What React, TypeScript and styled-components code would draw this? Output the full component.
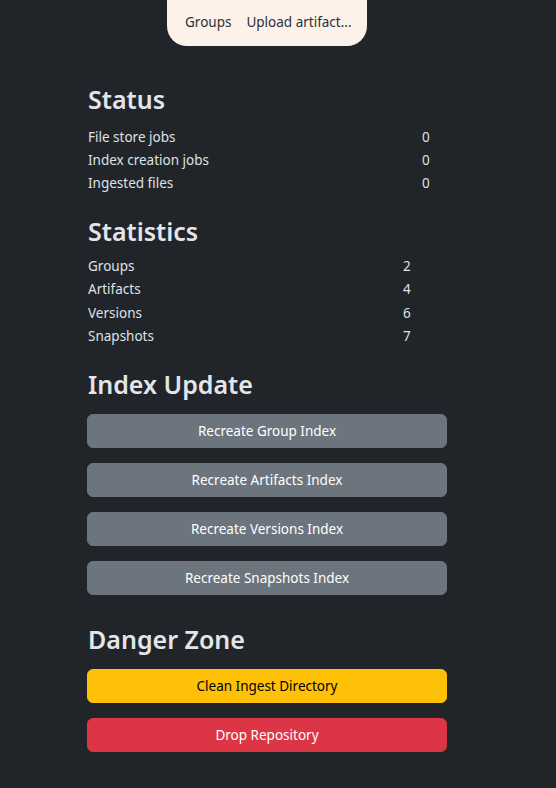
import React from "react";
import styled, { createGlobalStyle } from "styled-components";

const Global = createGlobalStyle`
  html, body { margin: 0; padding: 0; background: #212529; }
  body {
    font-family: "Noto Sans", "Open Sans", sans-serif;
    color: #dee2e6;
    font-size: 13.5px;
  }
`;

const Page = styled.div`
  min-height: 788px;
  background: #212529;
  display: flex;
  flex-direction: column;
`;

const Nav = styled.nav`
  margin-left: 167px;
  width: 200px;
  height: 46px;
  box-sizing: border-box;
  background: #fdf2ea;
  border-radius: 0 0 20px 20px;
  display: flex;
  align-items: center;
  gap: 15px;
  padding: 0 18px 3px 18px;
  color: #2b3035;
  font-size: 13.5px;
  white-space: nowrap;
`;

const NavLink = styled.span`
  cursor: pointer;
`;

const Main = styled.main`
  margin-left: 87px;
  width: 360px;
  display: flex;
  flex-direction: column;
`;

const Heading = styled.h2<{ $top: number; $bottom: number }>`
  margin: ${(p) => p.$top}px 0 ${(p) => p.$bottom}px 1px;
  font-size: 25px;
  font-weight: 600;
  line-height: 33px;
  color: #e3e6e9;
`;

const Table = styled.div<{ $label: number; $row: number }>`
  display: grid;
  grid-template-columns: ${(p) => p.$label}px auto;
  grid-auto-rows: ${(p) => p.$row}px;
  margin-left: 1px;
`;

const Cell = styled.div`
  font-size: 13.5px;
  line-height: 23px;
  color: #dee2e6;
`;

const ButtonStack = styled.div`
  display: flex;
  flex-direction: column;
  gap: 15px;
`;

const variants = {
  secondary: { bg: "#6c757d", fg: "#ffffff" },
  warning: { bg: "#ffc107", fg: "#000000" },
  danger: { bg: "#dc3545", fg: "#ffffff" },
};

const Button = styled.button<{ $variant: keyof typeof variants }>`
  height: 34px;
  width: 100%;
  border: 1px solid ${(p) => variants[p.$variant].bg};
  border-radius: 6px;
  background: ${(p) => variants[p.$variant].bg};
  color: ${(p) => variants[p.$variant].fg};
  font-family: "Noto Sans", "Open Sans", sans-serif;
  font-size: 13.5px;
  padding: 0 12px;
  cursor: pointer;
`;

const status = [
  ["File store jobs", "0"],
  ["Index creation jobs", "0"],
  ["Ingested files", "0"],
];

const stats = [
  ["Groups", "2"],
  ["Artifacts", "4"],
  ["Versions", "6"],
  ["Snapshots", "7"],
];

const indexButtons = [
  "Recreate Group Index",
  "Recreate Artifacts Index",
  "Recreate Versions Index",
  "Recreate Snapshots Index",
];

export default function App() {
  return (
    <Page>
      <Global />
      <Nav>
        <NavLink>Groups</NavLink>
        <NavLink>Upload artifact...</NavLink>
      </Nav>
      <Main>
        <Heading $top={37} $bottom={10}>Status</Heading>
        <Table $label={334} $row={23}>
          {status.map(([k, v]) => (
            <React.Fragment key={k}>
              <Cell>{k}</Cell>
              <Cell>{v}</Cell>
            </React.Fragment>
          ))}
        </Table>
        <Heading $top={20} $bottom={7}>Statistics</Heading>
        <Table $label={315} $row={23.3}>
          {stats.map(([k, v]) => (
            <React.Fragment key={k}>
              <Cell>{k}</Cell>
              <Cell>{v}</Cell>
            </React.Fragment>
          ))}
        </Table>
        <Heading $top={20} $bottom={13}>Index Update</Heading>
        <ButtonStack>
          {indexButtons.map((b) => (
            <Button key={b} $variant="secondary">{b}</Button>
          ))}
        </ButtonStack>
        <Heading $top={28} $bottom={13}>Danger Zone</Heading>
        <ButtonStack>
          <Button $variant="warning">Clean Ingest Directory</Button>
          <Button $variant="danger">Drop Repository</Button>
        </ButtonStack>
      </Main>
    </Page>
  );
}
